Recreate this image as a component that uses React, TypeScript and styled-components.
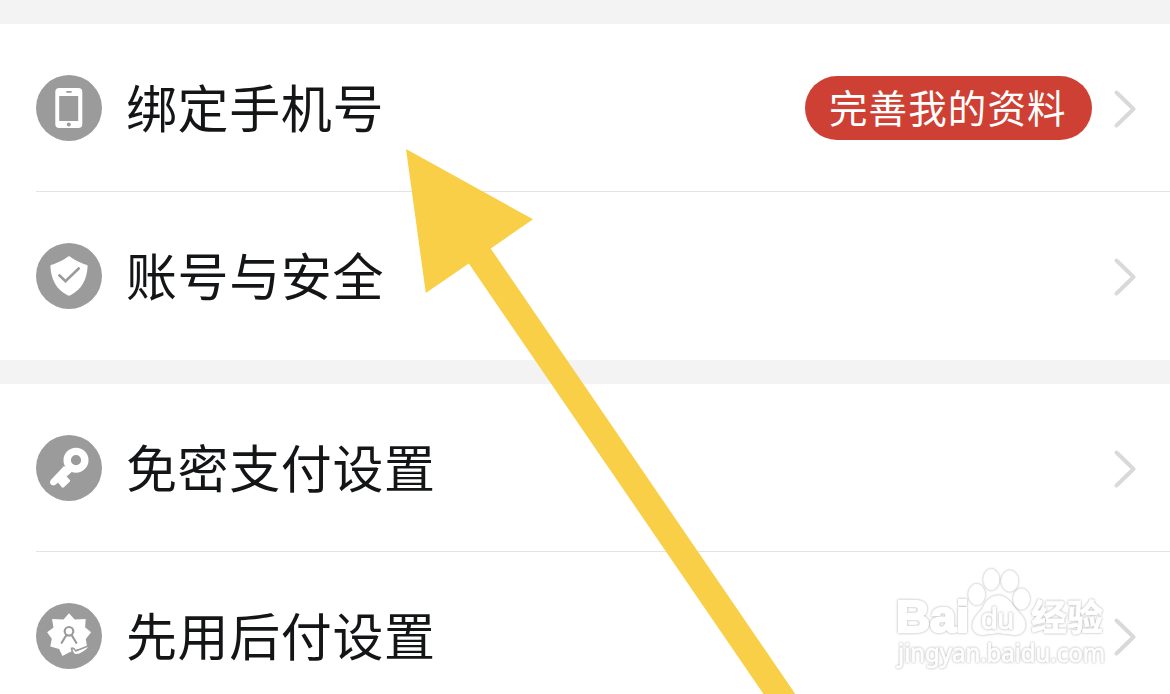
import type { ReactNode } from 'react'
import styled, { createGlobalStyle } from 'styled-components'

const GlobalStyle = createGlobalStyle`
  body {
    margin: 0;
    overflow: hidden;
    background: #fff;
    font-family: 'Noto Sans CJK SC', sans-serif;
  }
`

const Page = styled.main`
  position: relative;
  box-sizing: border-box;
  height: 694px;
  padding-top: 24px;
  overflow: hidden;
  display: flex;
  flex-direction: column;
  gap: 24px;
  background: #f3f3f3;
`

const Group = styled.section`
  flex-shrink: 0;
  padding-left: 36px;
  background: #fff;
`

const Row = styled.div`
  box-sizing: border-box;
  height: 168px;
  padding-right: 34px;
  display: flex;
  align-items: center;

  &:not(:last-child) {
    border-bottom: 1px solid #e3e3e3;
  }
`

const IconCircle = styled.svg`
  width: 66px;
  height: 66px;
  margin-right: 24px;
  flex-shrink: 0;
`

const Label = styled.span`
  flex: 1;
  padding-bottom: 4px;
  color: #141517;
  font-size: 51px;
  line-height: 72px;
  letter-spacing: 0.6px;
  white-space: nowrap;
`

const Pill = styled.span`
  box-sizing: border-box;
  height: 64px;
  width: 287px;
  margin-right: 22px;
  padding-left: 24px;
  border-radius: 32px;
  background: #ce4033;
  color: #fff;
  font-size: 38.5px;
  line-height: 60px;
  letter-spacing: 1.1px;
  white-space: nowrap;
`

const ChevronIcon = styled.svg`
  width: 22px;
  height: 40px;
  margin-top: 2px;
  flex-shrink: 0;
`

const ArrowOverlay = styled.svg`
  position: absolute;
  inset: 0;
  pointer-events: none;
`

const Watermark = styled.svg`
  position: absolute;
  left: 890px;
  top: 560px;
  pointer-events: none;

  g {
    filter: drop-shadow(0 0 0.9px #a8a8a8);
  }
`

const Chevron = () => (
  <ChevronIcon viewBox="0 0 22 40" fill="none">
    <path d="M2.500 3.500 19.500 20 2.500 36.500" stroke="#d9d9d9" strokeWidth="4" strokeLinecap="round" strokeLinejoin="round" />
  </ChevronIcon>
)

const PhoneGlyph = () => (
  <>
    <rect x="19.3" y="13" width="27" height="40" rx="4" fill="#fff" />
    <path d="M23.2 21h19v25h-19z" fill="#9b9b9b" />
    <path d="M31 16.9h4" stroke="#9b9b9b" strokeWidth="1.7" strokeLinecap="round" />
    <circle cx="32.8" cy="49.4" r="2" fill="#9b9b9b" />
  </>
)

const ShieldGlyph = () => (
  <>
    <path
      d="M33 13C28 16.5 21 20.5 15.5 21.8q-1.2.3-1.1 1.5C15 36 20 46.5 31.5 52.3q1.5.8 3 0C46 46.5 51 36 51.6 23.3q.1-1.2-1.1-1.5C45 20.5 38 16.5 33 13Z"
      fill="#fff"
    />
    <path d="m23.3 32.3 6.2 6 13.2-12.8" stroke="#9b9b9b" strokeWidth="2.6" strokeLinecap="round" fill="none" />
  </>
)

const KeyGlyph = () => (
  <>
    <path
      d="M28 31 14.6 45.2q-1.5 2.2 0 4.1 1.9 1.9 4.4.7l3.2-2.2 3.2 4q1.3 1.6 2.8.2l5.5-5.2q1-1 0-2.1l-3.1-3.2 5.4-4.7Z"
      fill="#fff"
    />
    <circle cx="40" cy="25.2" r="8.8" stroke="#fff" strokeWidth="7.4" fill="#9b9b9b" />
  </>
)

const BadgeGlyph = () => (
  <>
    <path
      d="m33 10.3 5.7 6.3 11-.6-.6 8.200 6 5.100-5.300 6.700 1.500 9-9.800 1.300-2.600 1-5.900 2.300-6.500 3.500-3.400-7.200-8.800-2.500 1.500-7.600-4.700-6.500 6.400-4.800L16 16l11.500.6Z"
      fill="#fff"
    />
    <g fill="none" stroke="#9b9b9b" strokeWidth="2.200">
      <circle cx="33" cy="28.300" r="4.300" />
      <path d="m30.400 32-4.700 7.800M35.600 32l4.700 7.800" strokeLinecap="round" />
    </g>
    <path
      d="M35.500 45.200q2.500-.5 4.200 2.800L54.500 42q-2.700 4.800-7.500 7.500-4 2.800-8 2.300-2.800-1.400-3.500-6.600Z"
      fill="#fff"
      stroke="#9b9b9b"
      strokeWidth="1.600"
      strokeLinejoin="round"
    />
  </>
)

interface SettingRowProps {
  icon: ReactNode
  label: string
  action?: string
}

const SettingRow = ({ icon, label, action }: SettingRowProps) => (
  <Row>
    <IconCircle viewBox="0 0 66 66">
      <circle cx="33" cy="33" r="33" fill="#9b9b9b" />
      {icon}
    </IconCircle>
    <Label>{label}</Label>
    {action && <Pill>{action}</Pill>}
    <Chevron />
  </Row>
)

const BaiduMark = () => (
  <Watermark width="230" height="120" viewBox="0 0 230 120" fill="#fff" stroke="#fff">
    <g>
      <text x="6" y="72" fontSize="45" fontWeight="700" fontFamily="Liberation Sans, sans-serif" strokeWidth="2.5" textLength="73" lengthAdjust="spacingAndGlyphs">
        Bai
      </text>
      <text x="141" y="71" fontSize="36" fontWeight="700" fontFamily="Noto Sans CJK SC, sans-serif" strokeWidth="0.8">
        经验
      </text>
      <text x="8" y="101.5" fontSize="25" fontFamily="Noto Sans, sans-serif" strokeWidth="0.8" textLength="207" lengthAdjust="spacingAndGlyphs">
        jingyan.baidu.com
      </text>
    </g>
    <g>
      <ellipse cx="86.7" cy="34.5" rx="8" ry="10.3" />
      <ellipse cx="101.3" cy="19.5" rx="7.6" ry="10.3" />
      <ellipse cx="119.8" cy="21" rx="8.2" ry="10.3" />
      <ellipse cx="131.5" cy="39" rx="8" ry="10.3" />
      <path d="M108.300 35.700C101 36 96 41 94 46 91 53 83 56 82.700 66 83.500 74 90 75.500 97 74Q108 71.500 120 74C128 75.500 134 74 135 66 135.500 58 130 54 125.500 49 121 43 117 36 108.300 35.700Z" />
    </g>
    <g>
      <text x="91" y="68.500" fontSize="30" fontFamily="Liberation Sans, sans-serif" strokeWidth="1" textLength="33" lengthAdjust="spacingAndGlyphs">
        du
      </text>
    </g>
  </Watermark>
)

const App = () => (
  <>
    <GlobalStyle />
    <Page>
      <Group>
        <SettingRow icon={<PhoneGlyph />} label="绑定手机号" action="完善我的资料" />
        <SettingRow icon={<ShieldGlyph />} label="账号与安全" />
      </Group>
      <Group>
        <SettingRow icon={<KeyGlyph />} label="免密支付设置" />
        <SettingRow icon={<BadgeGlyph />} label="先用后付设置" />
      </Group>
      <BaiduMark />
      <ArrowOverlay width="1170" height="694">
        <path d="M406 149 533 219.3 490.7 248.5 795.3 694H763.5L468.8 263.6 425.8 293Z" fill="#f8cf47" />
      </ArrowOverlay>
    </Page>
  </>
)

export default App
